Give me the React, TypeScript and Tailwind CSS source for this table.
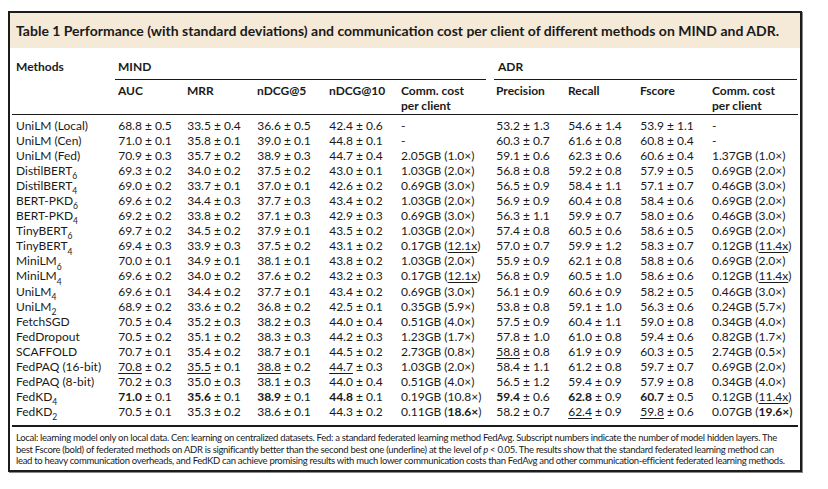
import React from "react";

type Cell = string | { v: string; e: string; b?: boolean; u?: boolean };

interface Row {
  name: string;
  sub?: string;
  mind: Cell[];
  mindCost: React.ReactNode;
  adr: Cell[];
  adrCost: React.ReactNode;
}

const FONT = "font-['Lato','Open_Sans',sans-serif]";

// numbers as "68.8 ± 0.5"; object form for bold / underline on the mean
function n(v: string, e: string, flag?: "b" | "u"): Cell {
  return { v, e, b: flag === "b", u: flag === "u" };
}

function cost(gb: string, ratio: string, flag?: "b" | "u") {
  if (flag === "u") {
    return (
      <>
        {gb} (<span className="underline underline-offset-2">{ratio}</span>)
      </>
    );
  }
  if (flag === "b") {
    return (
      <>
        {gb} (<span className="font-bold">{ratio}</span>)
      </>
    );
  }
  return `${gb} (${ratio})`;
}

const ROWS: Row[] = [
  { name: "UniLM (Local)", mind: [n("68.8", "0.5"), n("33.5", "0.4"), n("36.6", "0.5"), n("42.4", "0.6")], mindCost: "-", adr: [n("53.2", "1.3"), n("54.6", "1.4"), n("53.9", "1.1")], adrCost: "-" },
  { name: "UniLM (Cen)", mind: [n("71.0", "0.1"), n("35.8", "0.1"), n("39.0", "0.1"), n("44.8", "0.1")], mindCost: "-", adr: [n("60.3", "0.7"), n("61.6", "0.8"), n("60.8", "0.4")], adrCost: "-" },
  { name: "UniLM (Fed)", mind: [n("70.9", "0.3"), n("35.7", "0.2"), n("38.9", "0.3"), n("44.7", "0.4")], mindCost: cost("2.05GB", "1.0×"), adr: [n("59.1", "0.6"), n("62.3", "0.6"), n("60.6", "0.4")], adrCost: cost("1.37GB", "1.0×") },
  { name: "DistilBERT", sub: "6", mind: [n("69.3", "0.2"), n("34.0", "0.2"), n("37.5", "0.2"), n("43.0", "0.1")], mindCost: cost("1.03GB", "2.0×"), adr: [n("56.8", "0.8"), n("59.2", "0.8"), n("57.9", "0.5")], adrCost: cost("0.69GB", "2.0×") },
  { name: "DistilBERT", sub: "4", mind: [n("69.0", "0.2"), n("33.7", "0.1"), n("37.0", "0.1"), n("42.6", "0.2")], mindCost: cost("0.69GB", "3.0×"), adr: [n("56.5", "0.9"), n("58.4", "1.1"), n("57.1", "0.7")], adrCost: cost("0.46GB", "3.0×") },
  { name: "BERT-PKD", sub: "6", mind: [n("69.6", "0.2"), n("34.4", "0.3"), n("37.7", "0.3"), n("43.4", "0.2")], mindCost: cost("1.03GB", "2.0×"), adr: [n("56.9", "0.9"), n("60.4", "0.8"), n("58.4", "0.6")], adrCost: cost("0.69GB", "2.0×") },
  { name: "BERT-PKD", sub: "4", mind: [n("69.2", "0.2"), n("33.8", "0.2"), n("37.1", "0.3"), n("42.9", "0.3")], mindCost: cost("0.69GB", "3.0×"), adr: [n("56.3", "1.1"), n("59.9", "0.7"), n("58.0", "0.6")], adrCost: cost("0.46GB", "3.0×") },
  { name: "TinyBERT", sub: "6", mind: [n("69.7", "0.2"), n("34.5", "0.2"), n("37.9", "0.1"), n("43.5", "0.2")], mindCost: cost("1.03GB", "2.0×"), adr: [n("57.4", "0.8"), n("60.5", "0.6"), n("58.6", "0.5")], adrCost: cost("0.69GB", "2.0×") },
  { name: "TinyBERT", sub: "4", mind: [n("69.4", "0.3"), n("33.9", "0.3"), n("37.5", "0.2"), n("43.1", "0.2")], mindCost: cost("0.17GB", "12.1x", "u"), adr: [n("57.0", "0.7"), n("59.9", "1.2"), n("58.3", "0.7")], adrCost: cost("0.12GB", "11.4x", "u") },
  { name: "MiniLM", sub: "6", mind: [n("70.0", "0.1"), n("34.9", "0.1"), n("38.1", "0.1"), n("43.8", "0.2")], mindCost: cost("1.03GB", "2.0×"), adr: [n("55.9", "0.9"), n("62.1", "0.8"), n("58.8", "0.6")], adrCost: cost("0.69GB", "2.0×") },
  { name: "MiniLM", sub: "4", mind: [n("69.6", "0.2"), n("34.0", "0.2"), n("37.6", "0.2"), n("43.2", "0.3")], mindCost: cost("0.17GB", "12.1x", "u"), adr: [n("56.8", "0.9"), n("60.5", "1.0"), n("58.6", "0.6")], adrCost: cost("0.12GB", "11.4x", "u") },
  { name: "UniLM", sub: "4", mind: [n("69.6", "0.1"), n("34.4", "0.2"), n("37.7", "0.1"), n("43.4", "0.2")], mindCost: cost("0.69GB", "3.0×"), adr: [n("56.1", "0.9"), n("60.6", "0.9"), n("58.2", "0.5")], adrCost: cost("0.46GB", "3.0×") },
  { name: "UniLM", sub: "2", mind: [n("68.9", "0.2"), n("33.6", "0.2"), n("36.8", "0.2"), n("42.5", "0.1")], mindCost: cost("0.35GB", "5.9×"), adr: [n("53.8", "0.8"), n("59.1", "1.0"), n("56.3", "0.6")], adrCost: cost("0.24GB", "5.7×") },
  { name: "FetchSGD", mind: [n("70.5", "0.4"), n("35.2", "0.3"), n("38.2", "0.3"), n("44.0", "0.4")], mindCost: cost("0.51GB", "4.0×"), adr: [n("57.5", "0.9"), n("60.4", "1.1"), n("59.0", "0.8")], adrCost: cost("0.34GB", "4.0×") },
  { name: "FedDropout", mind: [n("70.5", "0.2"), n("35.1", "0.2"), n("38.3", "0.3"), n("44.2", "0.3")], mindCost: cost("1.23GB", "1.7×"), adr: [n("57.8", "1.0"), n("61.0", "0.8"), n("59.4", "0.6")], adrCost: cost("0.82GB", "1.7×") },
  { name: "SCAFFOLD", mind: [n("70.7", "0.1"), n("35.4", "0.2"), n("38.7", "0.1"), n("44.5", "0.2")], mindCost: cost("2.73GB", "0.8×"), adr: [n("58.8", "0.8", "u"), n("61.9", "0.9"), n("60.3", "0.5")], adrCost: cost("2.74GB", "0.5×") },
  { name: "FedPAQ (16-bit)", mind: [n("70.8", "0.2", "u"), n("35.5", "0.1", "u"), n("38.8", "0.2", "u"), n("44.7", "0.3", "u")], mindCost: cost("1.03GB", "2.0×"), adr: [n("58.4", "1.1"), n("61.2", "0.8"), n("59.7", "0.7")], adrCost: cost("0.69GB", "2.0×") },
  { name: "FedPAQ (8-bit)", mind: [n("70.2", "0.3"), n("35.0", "0.3"), n("38.1", "0.3"), n("44.0", "0.4")], mindCost: cost("0.51GB", "4.0×"), adr: [n("56.5", "1.2"), n("59.4", "0.9"), n("57.9", "0.8")], adrCost: cost("0.34GB", "4.0×") },
  { name: "FedKD", sub: "4", mind: [n("71.0", "0.1", "b"), n("35.6", "0.1", "b"), n("38.9", "0.1", "b"), n("44.8", "0.1", "b")], mindCost: cost("0.19GB", "10.8×"), adr: [n("59.4", "0.6", "b"), n("62.8", "0.9", "b"), n("60.7", "0.5", "b")], adrCost: cost("0.12GB", "11.4x", "u") },
  { name: "FedKD", sub: "2", mind: [n("70.5", "0.1"), n("35.3", "0.2"), n("38.6", "0.1"), n("44.3", "0.2")], mindCost: cost("0.11GB", "18.6×", "b"), adr: [n("58.2", "0.7"), n("62.4", "0.9", "u"), n("59.8", "0.6", "u")], adrCost: cost("0.07GB", "19.6×", "b") },
];

const GRID =
  "grid grid-cols-[103px_72px_70px_72px_72px_95px_72px_72px_72px_85px]";

function Num({ c }: { c: Cell }) {
  if (typeof c === "string") return <span>{c}</span>;
  return (
    <span className="block w-[54px] text-center whitespace-nowrap">
      <span
        className={`${c.b ? "font-bold" : ""} ${
          c.u ? "underline underline-offset-2" : ""
        }`}
      >
        {c.v}
      </span>
      {" ± "}
      {c.e}
    </span>
  );
}

export default function App() {
  return (
    <div className={`${FONT} bg-white text-[#1a1a1a] w-[828px] h-[489px] pt-[11px] pl-[8px]`}>
      <div className="w-[794px] border-2 border-[#1c1c1c] shadow-[1px_1px_0_#888]">
        {/* caption */}
        <div className="h-[35px] bg-[#f5e9d7] flex items-center px-[6px] text-[14px] font-bold whitespace-nowrap">
          Table 1 Performance (with standard deviations) and communication cost per client of different methods on MIND and ADR.
        </div>

        <div className="px-[2px] text-[12px] leading-[15px]">
          {/* header row 1 */}
          <div className={`${GRID} pt-[11px] font-bold`}>
            <div className="pl-[4px]">Methods</div>
            <div className="col-span-5 pr-[10px] pb-[5px]">
              <div className="pl-[3px]">MIND</div>
            </div>
            <div className="col-span-4 pb-[5px]">
              <div className="pl-[2px]">ADR</div>
            </div>
          </div>
          <div className={GRID}>
            <div />
            <div className="col-span-5 pr-[10px]">
              <div className="h-px bg-[#1a1a1a]" />
            </div>
            <div className="col-span-4">
              <div className="h-px bg-[#1a1a1a] -ml-[2px]" />
            </div>
          </div>

          {/* header row 2 */}
          <div className={`${GRID} font-bold pt-[3px] pb-[1px] border-b border-[#1a1a1a]`}>
            <div />
            <div className="pl-[3px]">AUC</div>
            <div>MRR</div>
            <div>nDCG@5</div>
            <div>nDCG@10</div>
            <div>
              Comm. cost
              <br />
              per client
            </div>
            <div>Precision</div>
            <div>Recall</div>
            <div>Fscore</div>
            <div>
              Comm. cost
              <br />
              per client
            </div>
          </div>

          {/* body */}
          <div className="pt-[3px] pb-[6px] border-b-2 border-[#1a1a1a]">
            {ROWS.map((r, i) => (
              <div key={i} className={`${GRID} h-[15.05px] whitespace-nowrap`}>
                <div className="pl-[4px]">
                  {r.name}
                  {r.sub && (
                    <sub className="text-[8.5px] leading-none align-[-2px]">{r.sub}</sub>
                  )}
                </div>
                {r.mind.map((c, j) => (
                  <div key={j} className={j === 0 ? "pl-[3px]" : ""}>
                    <Num c={c} />
                  </div>
                ))}
                <div>{r.mindCost}</div>
                {r.adr.map((c, j) => (
                  <div key={j}>
                    <Num c={c} />
                  </div>
                ))}
                <div>{r.adrCost}</div>
              </div>
            ))}
          </div>

          {/* footnote */}
          <div className="pt-[5px] pb-[3px] pl-[4px] text-[9.5px] tracking-[-0.3px] leading-[11.6px] whitespace-nowrap">
            Local: learning model only on local data. Cen: learning on centralized datasets. Fed: a standard federated learning method FedAvg. Subscript numbers indicate the number of model hidden layers. The
            <br />
            best Fscore (bold) of federated methods on ADR is significantly better than the second best one (underline) at the level of <i>p</i> &lt; 0.05. The results show that the standard federated learning method can
            <br />
            lead to heavy communication overheads, and FedKD can achieve promising results with much lower communication costs than FedAvg and other communication-efficient federated learning methods.
          </div>
        </div>
      </div>
    </div>
  );
}
